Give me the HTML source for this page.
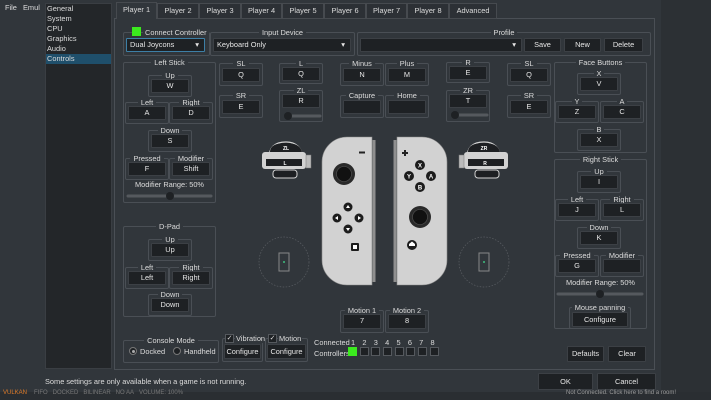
<!DOCTYPE html>
<html><head><meta charset="utf-8"><style>
*{margin:0;padding:0;box-sizing:border-box}
body{width:711px;height:400px;overflow:hidden;background:#31363b;font-family:"Liberation Sans",sans-serif;font-size:7.4px;color:#dcdcdc;position:relative}
div,span{position:absolute}
.g{border:1px solid #4a4f55;border-radius:2px}
.t{left:0;right:0;top:-5px;text-align:center;line-height:9px;height:9px;position:absolute}
.t span{position:static;display:inline-block;background:#31363b;padding:0 3px}
.b{background:#1e2124;border:1px solid #3c4045;text-align:center;line-height:12px;color:#e6e6e6;border-radius:1px}
.tab{top:3px;height:16px;border:1px solid #464a4f;background:#2c3035;text-align:center;line-height:14px}
.lbl{text-align:center;line-height:9px}
.cb{width:9px;height:9px;border:1px solid #55595e;background:#1e2124}
</style></head><body>
<div style="left:5px;top:3px">File</div><div style="left:23px;top:3px">Emul</div>
<div style="left:45px;top:3px;width:67px;height:366px;background:#232629;border:1px solid #3a3e43"></div>
<div style="left:47px;top:4px;line-height:10px">General<br>System<br>CPU<br>Graphics<br>Audio</div>
<div style="left:46px;top:54px;width:65px;height:10px;background:#1f4f6b;line-height:10px;padding-left:1px">Controls</div>
<div style="left:114px;top:18px;width:541px;height:352px;border:1px solid #4a4f55"></div>
<div class="tab" style="left:116px;top:2px;height:17px;width:41px;background:#31363b;border-bottom:none">Player 1</div>
<div class="tab" style="left:157px;width:42px">Player 2</div>
<div class="tab" style="left:199px;width:42px">Player 3</div>
<div class="tab" style="left:241px;width:41px">Player 4</div>
<div class="tab" style="left:282px;width:42px">Player 5</div>
<div class="tab" style="left:324px;width:42px">Player 6</div>
<div class="tab" style="left:366px;width:41px">Player 7</div>
<div class="tab" style="left:407px;width:42px">Player 8</div>
<div class="tab" style="left:449px;width:48px">Advanced</div>
<div style="left:661px;top:0;width:50px;height:392px;background:#2c3034"></div>

<div class="g" style="left:123px;top:32px;width:87px;height:24px"></div>
<div style="left:132px;top:27px;width:9px;height:9px;background:#3bea1e"></div>
<div style="left:143px;top:28px;background:#31363b;padding:0 2px">Connect Controller</div>
<div class="b" style="left:126px;top:38px;width:79px;height:14px;text-align:left;padding-left:3px;border-color:#3d7fa6">Dual Joycons<span style="right:5px;top:0">▾</span></div>
<div class="g" style="left:210px;top:32px;width:145px;height:24px"><div class="t"><span>Input Device</span></div></div>
<div class="b" style="left:213px;top:38px;width:138px;height:14px;text-align:left;padding-left:3px">Keyboard Only<span style="right:5px;top:0">▾</span></div>
<div class="g" style="left:357px;top:32px;width:294px;height:24px"><div class="t"><span>Profile</span></div></div>
<div class="b" style="left:360px;top:38px;width:162px;height:14px"><span style="right:5px;top:0">▾</span></div>
<div class="b" style="left:524px;top:38px;width:37px;height:14px">Save</div>
<div class="b" style="left:564px;top:38px;width:37px;height:14px">New</div>
<div class="b" style="left:604px;top:38px;width:39px;height:14px">Delete</div>

<div class="g" style="left:123px;top:62px;width:93px;height:141px"><div class="t"><span>Left Stick</span></div></div>
<div class="g" style="left:123px;top:226px;width:93px;height:91px"><div class="t"><span>D-Pad</span></div></div>
<div class="g" style="left:554px;top:62px;width:93px;height:91px"><div class="t"><span>Face Buttons</span></div></div>
<div class="g" style="left:554px;top:159px;width:93px;height:170px"><div class="t"><span>Right Stick</span></div></div>
<div class="lbl" style="left:123px;top:180px;width:93px">Modifier Range: 50%</div>
<div class="lbl" style="left:554px;top:278px;width:93px">Modifier Range: 50%</div>
<div class="g" style="left:569px;top:307px;width:62px;height:22px"><div class="t"><span>Mouse panning</span></div></div>
<div class="b" style="left:572px;top:312px;width:56px;height:15px;line-height:13px">Configure</div>

<div class="g" style="left:219px;top:63px;width:44px;height:23px"><div class="t"><span>SL</span></div></div><div class="b" style="left:222px;top:68px;width:38px;height:14px">Q</div>
<div class="g" style="left:219px;top:95px;width:44px;height:23px"><div class="t"><span>SR</span></div></div><div class="b" style="left:222px;top:100px;width:38px;height:14px">E</div>
<div class="g" style="left:279px;top:63px;width:44px;height:21px"><div class="t"><span>L</span></div></div><div class="b" style="left:282px;top:67px;width:38px;height:14px">Q</div>
<div class="g" style="left:279px;top:90px;width:44px;height:32px"><div class="t"><span>ZL</span></div></div><div class="b" style="left:282px;top:94px;width:38px;height:14px">R</div>
<div class="g" style="left:340px;top:63px;width:44px;height:23px"><div class="t"><span>Minus</span></div></div><div class="b" style="left:343px;top:68px;width:38px;height:14px">N</div>
<div class="g" style="left:385px;top:63px;width:44px;height:23px"><div class="t"><span>Plus</span></div></div><div class="b" style="left:388px;top:68px;width:38px;height:14px">M</div>
<div class="g" style="left:340px;top:95px;width:44px;height:23px"><div class="t"><span>Capture</span></div></div><div class="b" style="left:343px;top:100px;width:38px;height:14px"></div>
<div class="g" style="left:385px;top:95px;width:44px;height:23px"><div class="t"><span>Home</span></div></div><div class="b" style="left:388px;top:100px;width:38px;height:14px"></div>
<div class="g" style="left:446px;top:62px;width:44px;height:21px"><div class="t"><span>R</span></div></div><div class="b" style="left:449px;top:66px;width:38px;height:14px">E</div>
<div class="g" style="left:446px;top:90px;width:44px;height:32px"><div class="t"><span>ZR</span></div></div><div class="b" style="left:449px;top:94px;width:38px;height:14px">T</div>
<div class="g" style="left:507px;top:63px;width:44px;height:23px"><div class="t"><span>SL</span></div></div><div class="b" style="left:510px;top:68px;width:38px;height:14px">Q</div>
<div class="g" style="left:507px;top:95px;width:44px;height:23px"><div class="t"><span>SR</span></div></div><div class="b" style="left:510px;top:100px;width:38px;height:14px">E</div>

<div class="g" style="left:148px;top:75px;width:44px;height:22px"><div class="t"><span>Up</span></div></div><div class="b" style="left:151px;top:79px;width:38px;height:14px">W</div>
<div class="g" style="left:125px;top:102px;width:44px;height:22px"><div class="t"><span>Left</span></div></div><div class="b" style="left:128px;top:106px;width:38px;height:14px">A</div>
<div class="g" style="left:169px;top:102px;width:44px;height:22px"><div class="t"><span>Right</span></div></div><div class="b" style="left:172px;top:106px;width:38px;height:14px">D</div>
<div class="g" style="left:148px;top:130px;width:44px;height:22px"><div class="t"><span>Down</span></div></div><div class="b" style="left:151px;top:134px;width:38px;height:14px">S</div>
<div class="g" style="left:125px;top:158px;width:44px;height:22px"><div class="t"><span>Pressed</span></div></div><div class="b" style="left:128px;top:162px;width:38px;height:14px">F</div>
<div class="g" style="left:169px;top:158px;width:44px;height:22px"><div class="t"><span>Modifier</span></div></div><div class="b" style="left:172px;top:162px;width:38px;height:14px">Shift</div>

<div class="g" style="left:148px;top:239px;width:44px;height:22px"><div class="t"><span>Up</span></div></div><div class="b" style="left:151px;top:243px;width:38px;height:14px">Up</div>
<div class="g" style="left:125px;top:267px;width:44px;height:22px"><div class="t"><span>Left</span></div></div><div class="b" style="left:128px;top:271px;width:38px;height:14px">Left</div>
<div class="g" style="left:169px;top:267px;width:44px;height:22px"><div class="t"><span>Right</span></div></div><div class="b" style="left:172px;top:271px;width:38px;height:14px">Right</div>
<div class="g" style="left:148px;top:294px;width:44px;height:22px"><div class="t"><span>Down</span></div></div><div class="b" style="left:151px;top:298px;width:38px;height:14px">Down</div>

<div class="g" style="left:577px;top:73px;width:44px;height:22px"><div class="t"><span>X</span></div></div><div class="b" style="left:580px;top:77px;width:38px;height:14px">V</div>
<div class="g" style="left:555px;top:101px;width:44px;height:22px"><div class="t"><span>Y</span></div></div><div class="b" style="left:558px;top:105px;width:38px;height:14px">Z</div>
<div class="g" style="left:600px;top:101px;width:44px;height:22px"><div class="t"><span>A</span></div></div><div class="b" style="left:603px;top:105px;width:38px;height:14px">C</div>
<div class="g" style="left:577px;top:129px;width:44px;height:22px"><div class="t"><span>B</span></div></div><div class="b" style="left:580px;top:133px;width:38px;height:14px">X</div>

<div class="g" style="left:577px;top:171px;width:44px;height:22px"><div class="t"><span>Up</span></div></div><div class="b" style="left:580px;top:175px;width:38px;height:14px">I</div>
<div class="g" style="left:555px;top:199px;width:44px;height:22px"><div class="t"><span>Left</span></div></div><div class="b" style="left:558px;top:203px;width:38px;height:14px">J</div>
<div class="g" style="left:600px;top:199px;width:44px;height:22px"><div class="t"><span>Right</span></div></div><div class="b" style="left:603px;top:203px;width:38px;height:14px">L</div>
<div class="g" style="left:577px;top:227px;width:44px;height:22px"><div class="t"><span>Down</span></div></div><div class="b" style="left:580px;top:231px;width:38px;height:14px">K</div>
<div class="g" style="left:555px;top:255px;width:44px;height:22px"><div class="t"><span>Pressed</span></div></div><div class="b" style="left:558px;top:259px;width:38px;height:14px">G</div>
<div class="g" style="left:600px;top:255px;width:44px;height:22px"><div class="t"><span>Modifier</span></div></div><div class="b" style="left:603px;top:259px;width:38px;height:14px"></div>

<div class="g" style="left:340px;top:310px;width:44px;height:23px"><div class="t"><span>Motion 1</span></div></div><div class="b" style="left:343px;top:314px;width:38px;height:15px">7</div>
<div class="g" style="left:385px;top:310px;width:44px;height:23px"><div class="t"><span>Motion 2</span></div></div><div class="b" style="left:388px;top:314px;width:38px;height:15px">8</div>

<div class="g" style="left:123px;top:340px;width:96px;height:23px"><div class="t"><span>Console Mode</span></div></div>
<div style="left:129px;top:347px;width:8px;height:8px;border-radius:50%;border:1px solid #777;background:#1e2124"><span style="left:1.5px;top:1.5px;width:3px;height:3px;border-radius:50%;background:#aaa"></span></div>
<div style="left:140px;top:347px">Docked</div>
<div style="left:173px;top:347px;width:8px;height:8px;border-radius:50%;border:1px solid #777;background:#1e2124"></div>
<div style="left:184px;top:347px">Handheld</div>
<div class="g" style="left:222px;top:338px;width:41px;height:24px"></div>
<div class="cb" style="left:225px;top:334px;text-align:center;line-height:7px;font-size:7px">✓</div><div style="left:235px;top:334px;background:#31363b;padding:0 1px">Vibration</div>
<div class="b" style="left:224px;top:344px;width:37px;height:15px;line-height:13px">Configure</div>
<div class="g" style="left:265px;top:338px;width:43px;height:24px"></div>
<div class="cb" style="left:268px;top:334px;text-align:center;line-height:7px;font-size:7px">✓</div><div style="left:278px;top:334px;background:#31363b;padding:0 1px">Motion</div>
<div class="b" style="left:267px;top:344px;width:39px;height:15px;line-height:13px">Configure</div>
<div style="left:314px;top:338px">Connected</div><div style="left:314px;top:349px">Controllers</div>
<div style="left:351px;top:338px;word-spacing:5.2px;white-space:pre">1 2 3 4 5 6 7 8</div>
<div style="left:348px;top:347px;width:9px;height:9px;background:#3bea1e"></div>
<div class="cb" style="left:360px;top:347px"></div><div class="cb" style="left:371px;top:347px"></div><div class="cb" style="left:383px;top:347px"></div><div class="cb" style="left:395px;top:347px"></div><div class="cb" style="left:406px;top:347px"></div><div class="cb" style="left:418px;top:347px"></div><div class="cb" style="left:430px;top:347px"></div>
<div class="b" style="left:567px;top:346px;width:37px;height:16px;line-height:14px">Defaults</div>
<div class="b" style="left:608px;top:346px;width:38px;height:16px;line-height:14px">Clear</div>

<div style="left:45px;top:377px">Some settings are only available when a game is not running.</div>
<div class="b" style="left:538px;top:373px;width:55px;height:17px;line-height:15px">OK</div>
<div class="b" style="left:597px;top:373px;width:59px;height:17px;line-height:15px">Cancel</div>
<div style="left:0;top:392px;width:711px;height:8px;background:#2a2e32"></div>
<div style="left:3px;top:390px;color:#e07b28;font-size:6px">VULKAN</div>
<div style="left:34px;top:390px;color:#777;font-size:6px">FIFO&nbsp;&nbsp;&nbsp;DOCKED&nbsp;&nbsp;&nbsp;BILINEAR&nbsp;&nbsp;&nbsp;NO AA&nbsp;&nbsp;&nbsp;VOLUME: 100%</div>
<div style="left:566px;top:390px;color:#999;font-size:6px">Not Connected. Click here to find a room!</div>

<svg style="position:absolute;left:0;top:0" width="711" height="400" viewBox="0 0 711 400">
<g stroke="#55595e" stroke-width="3" stroke-linecap="round"><line x1="128" y1="196" x2="211" y2="196"/><line x1="558" y1="294" x2="642" y2="294"/><line x1="286" y1="116" x2="320" y2="116"/><line x1="453" y1="115" x2="487" y2="115"/></g>
<g fill="#1e2124"><circle cx="170" cy="196" r="4"/><circle cx="600" cy="294" r="4"/><circle cx="288" cy="116" r="4"/><circle cx="455" cy="115" r="4"/></g>
<path d="M372,137 L347,137 A25,25 0 0 0 322,162 L322,260 A25,25 0 0 0 347,285 L372,285 Z" fill="#d2d2d2" stroke="#8a8a8a" stroke-width=".6"/>
<path d="M397,137 L422,137 A25,25 0 0 1 447,162 L447,260 A25,25 0 0 1 422,285 L397,285 Z" fill="#d2d2d2" stroke="#8a8a8a" stroke-width=".6"/>
<rect x="372.5" y="140" width="3" height="142" fill="#8f8f8f"/><rect x="393.5" y="140" width="3" height="142" fill="#8f8f8f"/>
<circle cx="344" cy="174" r="11" fill="#2a2a2a"/><circle cx="344" cy="174" r="7.5" fill="#111" stroke="#555" stroke-width=".6"/>
<circle cx="420" cy="217" r="11" fill="#2a2a2a"/><circle cx="420" cy="217" r="7.5" fill="#111" stroke="#555" stroke-width=".6"/>
<rect x="359" y="151.5" width="6" height="2" fill="#222"/>
<path d="M402,153h6M405,150v6" stroke="#222" stroke-width="2"/>
<g fill="#1c1c1c"><circle cx="348" cy="207" r="4.5"/><circle cx="348" cy="229" r="4.5"/><circle cx="337" cy="218" r="4.5"/><circle cx="359" cy="218" r="4.5"/>
<circle cx="420" cy="165" r="5"/><circle cx="409" cy="176" r="5"/><circle cx="431" cy="176" r="5"/><circle cx="420" cy="187" r="5"/><circle cx="412" cy="245" r="5"/><rect x="351" y="243" width="8" height="8" rx="1"/></g>
<rect x="353" y="245" width="4" height="4" fill="#fff"/>
<g fill="#fff"><path d="M348,205l2,3h-4z"/><path d="M348,231l2,-3h-4z"/><path d="M335,218l3,-2v4z"/><path d="M361,218l-3,-2v4z"/><path d="M409,246h6v-2l-3,-2.5l-3,2.5z"/></g>
<g fill="#fff" font-size="6" font-weight="bold" text-anchor="middle" font-family="Liberation Sans"><text x="420" y="167.5">X</text><text x="409" y="178.5">Y</text><text x="431" y="178.5">A</text><text x="420" y="189.5">B</text></g>
<g stroke="#d2d2d2" stroke-width="1.2">
<path d="M269,158 Q269,142 286,142 Q301,142 303,158 Z" fill="#1d1f22"/>
<path d="M467,158 Q467,142 484,142 Q499,142 501,158 Z" fill="#1d1f22"/></g>
<rect x="262" y="152" width="44" height="17" rx="3" fill="#d2d2d2"/><rect x="266" y="159" width="36" height="7" fill="#1d1f22"/>
<rect x="464" y="152" width="44" height="17" rx="3" fill="#d2d2d2"/><rect x="468" y="159" width="36" height="7" fill="#1d1f22"/>
<path d="M270,152 Q270,143 286,143 Q300,143 302,152 Z" fill="#1d1f22"/><path d="M468,152 Q468,143 484,143 Q498,143 500,152 Z" fill="#1d1f22"/>
<rect x="306" y="155" width="5" height="13" fill="#bbb" stroke="#777" stroke-width=".5"/><rect x="459" y="155" width="5" height="13" fill="#bbb" stroke="#777" stroke-width=".5"/>
<rect x="273" y="170" width="24" height="8" rx="3" fill="#1d1f22" stroke="#d2d2d2"/><rect x="475" y="170" width="24" height="8" rx="3" fill="#1d1f22" stroke="#d2d2d2"/>
<g fill="#fff" font-size="5" font-weight="bold" text-anchor="middle" font-family="Liberation Sans"><text x="286" y="150">ZL</text><text x="285" y="165">L</text><text x="484" y="150">ZR</text><text x="485" y="165">R</text></g>
<g fill="none" stroke="#5a5e63" stroke-width=".7" stroke-dasharray="1.5,1.5"><circle cx="284" cy="262" r="25"/><circle cx="484" cy="262" r="25"/></g>
<g fill="none" stroke="#888"><rect x="279" y="253" width="10" height="18"/><rect x="479" y="253" width="10" height="18"/></g>
<circle cx="284" cy="262" r="1" fill="#3fbf7f"/><circle cx="484" cy="262" r="1" fill="#3fbf7f"/>
</svg>
</body></html>
